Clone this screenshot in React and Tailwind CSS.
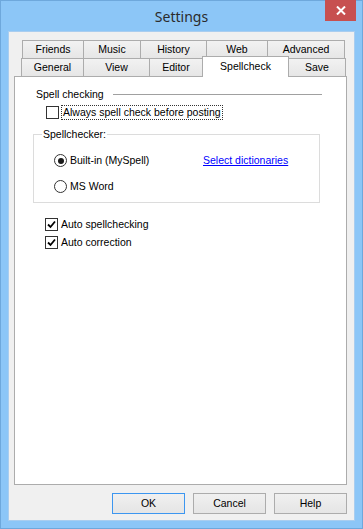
import React from "react";

function CheckBox({ checked }) {
  return (
    <span className="flex h-[13px] w-[13px] shrink-0 items-center justify-center border border-[#333333] bg-white">
      {checked && (
        <svg width="9" height="9" viewBox="0 0 9 9">
          <path d="M1 4.5 L3.5 7 L8 1.5" fill="none" stroke="#000" strokeWidth="1.8" />
        </svg>
      )}
    </span>
  );
}

function Radio({ checked }) {
  return (
    <span className="flex h-[13px] w-[13px] shrink-0 items-center justify-center rounded-full border border-[#333333] bg-white">
      {checked && <span className="h-[6px] w-[6px] rounded-full bg-[#1a1a1a]" />}
    </span>
  );
}

function Tab({ label, w, first }) {
  return (
    <div
      className={`flex h-[18px] items-center justify-center border-x border-t border-[#acacac] bg-gradient-to-b from-[#f2f2f2] to-[#e6e6e6] ${w} ${first ? "" : "-ml-px"}`}
    >
      {label}
    </div>
  );
}

export default function App() {
  const row1 = [
    ["Friends", "w-[62px]"],
    ["Music", "w-[58px]"],
    ["History", "w-[67px]"],
    ["Web", "w-[62px]"],
    ["Advanced", "w-[78px]"],
  ];

  return (
    <div
      className="flex h-[529px] w-[363px] flex-col border border-[#6ea8dc] bg-[#8cc6f7] text-[10.5px] leading-[13px] text-black"
      style={{ fontFamily: '"Liberation Sans", Arial, sans-serif' }}
    >
      {/* title bar */}
      <div className="relative flex h-[30px] items-center justify-center">
        <span
          className="text-[14px] text-[#2b2b2b]"
          style={{ fontFamily: '"Noto Sans", "Open Sans", sans-serif' }}
        >
          Settings
        </span>
        <div className="absolute right-[6px] top-[-1px] flex h-[21px] w-[31px] items-center justify-center bg-[#c75050]">
          <svg width="10" height="9" viewBox="0 0 10 9">
            <path d="M1 0.5 L9 8.5 M9 0.5 L1 8.5" stroke="#fff" strokeWidth="2" />
          </svg>
        </div>
      </div>

      {/* client area */}
      <div className="mx-[7px] mb-[7px] flex flex-1 flex-col border border-[#a9cdef] bg-[#f0f0f0] pt-[8px]">
        <div className="ml-[5px] flex w-[333px] flex-col">
          {/* tabs row 1 */}
          <div className="flex pl-[8px]">
            {row1.map(([l, w], i) => (
              <Tab key={l} label={l} w={w} first={i === 0} />
            ))}
          </div>
          {/* tabs row 2 */}
          <div className="flex h-[18px] items-end pl-[7px]">
            <Tab label="General" w="w-[63px]" first />
            <Tab label="View" w="w-[67px]" />
            <Tab label="Editor" w="w-[54px]" />
            <div className="relative z-10 -mb-px -ml-px flex h-[21px] w-[87px] items-start justify-center border-x border-t border-[#acacac] bg-white pt-[3px]">
              Spellcheck
            </div>
            <Tab label="Save" w="w-[58px]" />
          </div>

          {/* panel */}
          <div className="flex h-[409px] flex-col border border-[#acacac] bg-white">
            <div className="mt-[11px] flex h-[13px] items-center pl-[21px] pr-[24px]">
              <span>Spell checking</span>
              <span className="ml-[9px] h-px flex-1 bg-[#a0a0a0]" />
            </div>

            <div className="mt-[5px] flex h-[13px] items-center pl-[31px]">
              <CheckBox />
              <span className="ml-[3px] px-[1px] outline outline-1 outline-dotted outline-[#333]">
                Always spell check before posting
              </span>
            </div>

            <fieldset className="ml-[18px] mt-[9px] w-[287px] border border-[#dcdcdc] pb-[9px]">
              <legend className="ml-[8px] px-[1px]">Spellchecker:</legend>
              <div className="ml-[20px] mt-[13px] flex h-[13px] items-center">
                <Radio checked />
                <span className="ml-[3px] w-[133px]">Built-in (MySpell)</span>
                <span className="text-[#0000ff] underline">Select dictionaries</span>
              </div>
              <div className="ml-[20px] mt-[13px] flex h-[13px] items-center">
                <Radio />
                <span className="ml-[3px]">MS Word</span>
              </div>
            </fieldset>

            <div className="mt-[15px] flex h-[13px] items-center pl-[30px]">
              <CheckBox checked />
              <span className="ml-[3px]">Auto spellchecking</span>
            </div>
            <div className="mt-[5px] flex h-[13px] items-center pl-[30px]">
              <CheckBox checked />
              <span className="ml-[3px]">Auto correction</span>
            </div>
          </div>

          {/* buttons */}
          <div className="mt-[8px] flex justify-end gap-[8px]">
            <button className="h-[21px] w-[73px] border border-[#3c96f0] bg-gradient-to-b from-[#f0f0f0] to-[#e5e5e5]">
              OK
            </button>
            <button className="h-[21px] w-[73px] border border-[#acacac] bg-gradient-to-b from-[#f0f0f0] to-[#e5e5e5]">
              Cancel
            </button>
            <button className="h-[21px] w-[73px] border border-[#acacac] bg-gradient-to-b from-[#f0f0f0] to-[#e5e5e5]">
              Help
            </button>
          </div>
        </div>
      </div>
    </div>
  );
}
